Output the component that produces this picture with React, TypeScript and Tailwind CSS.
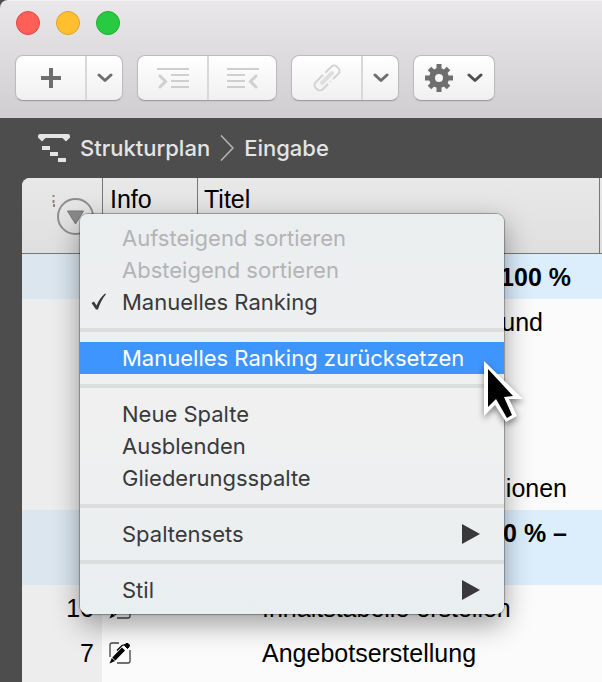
import type { ReactNode } from "react";

type Row = {
  nr?: string;
  note?: boolean;
  title?: string;
  group?: boolean;
  height?: string;
  // where a right-aligned title ends
  end?: string;
};

const rows: Row[] = [
  { title: "100 %", group: true, end: "text-right pr-7" },
  { title: "und", height: "h-19", end: "text-right pr-14" },
  {},
  {},
  { title: "ionen", end: "text-right pr-8" },
  { title: "10 % –", group: true, height: "h-[75px]", end: "text-right pr-8" },
  { nr: "16", note: true, title: "Inhaltstabelle erstellen" },
  { nr: "7", note: true, title: "Angebotserstellung" },
  {},
];

const menuGroups = [
  [
    { label: "Aufsteigend sortieren", disabled: true },
    { label: "Absteigend sortieren", disabled: true },
    { label: "Manuelles Ranking", checked: true },
  ],
  [{ label: "Manuelles Ranking zurücksetzen", active: true }],
  [{ label: "Neue Spalte" }, { label: "Ausblenden" }, { label: "Gliederungsspalte" }],
  [{ label: "Spaltensets", submenu: true }],
  [{ label: "Stil", submenu: true }],
] as {
  label: string;
  disabled?: boolean;
  checked?: boolean;
  active?: boolean;
  submenu?: boolean;
}[][];

function Chevron() {
  return (
    <svg viewBox="0 0 16 10" fill="none" stroke="currentColor" strokeWidth={3} strokeLinecap="round" strokeLinejoin="round" className="w-4 h-[10px]">
      <path d="M2 2l6 5.5L14 2" />
    </svg>
  );
}

function IndentIcon() {
  return (
    <svg viewBox="0 0 32 22" fill="none" stroke="currentColor" strokeWidth={2} className="w-8 h-[22px]">
      <path d="M0 2h32M14 8h18M14 14h18M14 20h18" />
      <path d="M3 9l5.500 5.500L3 20" strokeWidth={3} strokeLinecap="round" />
    </svg>
  );
}

function OutdentIcon() {
  return (
    <svg viewBox="0 0 32 22" fill="none" stroke="currentColor" strokeWidth={2} className="w-8 h-[22px]">
      <path d="M0 2h32M0 8h18M0 14h18M0 20h18" />
      <path d="M29 9l-5.500 5.500L29 20" strokeWidth={3} strokeLinecap="round" />
    </svg>
  );
}

function LinkIcon() {
  return (
    <svg viewBox="0 0 28 28" fill="none" stroke="currentColor" strokeWidth={2} className="w-7 h-7">
      <g transform="rotate(-45 14 14)">
        <path d="M10.500 19H3a4 4 0 0 1-4-4v-2a4 4 0 0 1 4-4H13.500" />
        <path d="M17.500 19H25a4 4 0 0 0 4-4v-2a4 4 0 0 0-4-4H16.500" />
        <path d="M13.500 19h1" />
        <path d="M7 14h14" strokeWidth={4} strokeLinecap="round" opacity={0.7} />
      </g>
    </svg>
  );
}

function GearIcon() {
  return (
    <svg viewBox="0 0 28 28" className="w-7 h-7">
      <g stroke="currentColor" strokeWidth={5}>
        <path d="M14 0v7M14 21v7M0 14h7M21 14h7M4.500 4.500l5 5M18.500 18.500l5 5M4.500 23.500l5-5M18.500 9.500l5-5" />
      </g>
      <circle cx="14" cy="14" r="7" fill="none" stroke="currentColor" strokeWidth={6} />
    </svg>
  );
}

function NoteIcon() {
  return (
    <svg viewBox="0 0 22 22" className="w-[22px] h-[22px]">
      <path d="M10 1H3a2 2 0 0 0-2 2v12M21 8v11a2 2 0 0 1-2 2H8" fill="none" stroke="#444" strokeWidth={1.300} />
      <path d="M0.500 21.500l2.300-5.500 3.200 3z" />
      <path d="M4.800 17L14.500 7" stroke="#000" strokeWidth={4.300} />
      <path d="M15.500 3.500l1.500-2h2l1.500 1.500-.5 2-1.500 1.500z" stroke="#000" strokeWidth={1} />
      <path d="M8 8.500L13 3.500l3-1" fill="none" stroke="#000" strokeWidth={1.300} />
    </svg>
  );
}

function ToolGroup({ children }: { children: ReactNode }) {
  return (
    <div className="flex h-[46px] rounded-lg border border-[#bdbbbd] border-b-[#9d9b9d] bg-linear-to-b from-white to-[#f0f0f0] divide-x-2 divide-[#d9d8d9] shadow-xs">
      {children}
    </div>
  );
}

function ToolButton({ label, size, children }: { label: string; size: string; children: ReactNode }) {
  return (
    <button type="button" aria-label={label} className={`flex items-center justify-center ${size}`}>
      {children}
    </button>
  );
}

function ColumnMenu() {
  return (
    <div
      role="menu"
      className="absolute left-20 top-[214px] w-106 py-2 rounded-lg bg-linear-to-b from-[#ebeeef] via-[#f0f0f0] to-[#e9eef0] text-[#39393b] font-[Inter,sans-serif] text-[22px] leading-8 shadow-[0_0_1px_1px_rgba(0,0,0,0.3),0_10px_28px_rgba(0,0,0,0.38)]"
    >
      {menuGroups.map((group, i) => (
        <div key={i}>
          {i > 0 && <div role="separator" className="my-[10px] h-1 bg-[#dcdddd]" />}
          {group.map((item) => (
            <button
              key={item.label}
              type="button"
              role="menuitem"
              disabled={item.disabled}
              className={`flex w-full h-8 items-center pr-6 text-left ${
                item.active ? "bg-[#3f95fe] text-white" : item.disabled ? "text-[#b2b4b5]" : ""
              }`}
            >
              <span className="flex w-[42px] pl-[11px]">
                {item.checked && (
                  <svg viewBox="0 0 16 18" className="w-4 h-[18px]">
                    <path d="M0.500 10L3 8.500l2.500 4C7.500 7.500 10.500 3.500 14 .5l1 .7C11.500 5.500 8.800 10.500 7 16.500H5z" fill="currentColor" />
                  </svg>
                )}
              </span>
              <span className="flex-1 whitespace-nowrap">{item.label}</span>
              {item.submenu && (
                <svg viewBox="0 0 18 20" className="w-[18px] h-5">
                  <path d="M0 0l18 10L0 20z" fill="currentColor" />
                </svg>
              )}
            </button>
          ))}
        </div>
      ))}
    </div>
  );
}

export default function App() {
  return (
    <div className="relative flex h-screen flex-col overflow-hidden bg-[#4d4d4d]">
      {/* Title bar with toolbar */}
      <header className="shrink-0 h-[118px] px-4 pt-[10px] rounded-tl-lg border-t border-[#f4f3f4] bg-linear-to-b from-[#e9e7ea] to-[#d0ced0]">
        <div className="flex gap-4">
          <button type="button" aria-label="Schließen" className="size-6 rounded-full border border-[#e2463f] bg-[#ff5f57]" />
          <button type="button" aria-label="Minimieren" className="size-6 rounded-full border border-[#e0a033] bg-[#ffbf2f]" />
          <button type="button" aria-label="Zoomen" className="size-6 rounded-full border border-[#1dad2b] bg-[#28ca41]" />
        </div>
        <div className="flex gap-[14px] mt-5 -ml-px text-[#6e6e6e]">
          <ToolGroup>
            <ToolButton label="Hinzufügen" size="w-[71px]">
              <svg viewBox="0 0 20 20" stroke="currentColor" strokeWidth={4} className="size-5">
                <path d="M10 0v20M0 10h20" />
              </svg>
            </ToolButton>
            <ToolButton label="Hinzufügen-Optionen" size="w-[35px]">
              <Chevron />
            </ToolButton>
          </ToolGroup>
          <div className="text-[#cfcfcf]">
            <ToolGroup>
              <ToolButton label="Einrücken" size="w-[71px]">
                <IndentIcon />
              </ToolButton>
              <ToolButton label="Ausrücken" size="w-[67px]">
                <OutdentIcon />
              </ToolButton>
            </ToolGroup>
          </div>
          <ToolGroup>
            <ToolButton label="Verknüpfen" size="w-[71px] text-[#d3d3d3]">
              <LinkIcon />
            </ToolButton>
            <ToolButton label="Verknüpfen-Optionen" size="w-[35px]">
              <Chevron />
            </ToolButton>
          </ToolGroup>
          <ToolGroup>
            <ToolButton label="Aktionen" size="w-20 gap-[14px]">
              <GearIcon />
              <span className="text-[#505050]">
                <Chevron />
              </span>
            </ToolButton>
          </ToolGroup>
        </div>
      </header>

      {/* Breadcrumb */}
      <nav className="flex shrink-0 h-15 items-center pl-[38px] font-[Inter,sans-serif] text-[22px] font-medium text-[#e4e4e4]">
        <svg viewBox="0 0 32 28" fill="currentColor" className="w-8 h-7 mr-[10px]">
          <path d="M2 0h28a2 2 0 0 1 2 2v1.500L28 7.500 24.500 4h-17L4 7.500 0 3.500V2a2 2 0 0 1 2-2zM4 12h8v4H4zM12 18h8v4h-8zM20 24h8v4h-8z" />
        </svg>
        <a href="#strukturplan">Strukturplan</a>
        <svg viewBox="0 0 14 26" fill="none" stroke="#b4b4b4" strokeWidth={1.600} className="w-[14px] h-[26px] mx-[10px]">
          <path d="M1 0.500l12 12.500L1 25.500" />
        </svg>
        <a href="#eingabe">Eingabe</a>
      </nav>

      <main className="flex-1 min-h-0 pl-[22px]">
        <div className="h-full overflow-hidden rounded-tl-lg bg-[#fbfbfb]">
          <table className="w-full table-fixed border-separate border-spacing-0 font-['Liberation_Sans',sans-serif] text-[25px] leading-[30px] text-black">
            <colgroup>
              <col className="w-20" />
              <col className="w-[95px]" />
              <col />
              <col className="w-[3px]" />
            </colgroup>
            <thead>
              <tr className="h-19 bg-linear-to-b from-[#e8e8e8] to-[#dfdfdf] align-top text-left">
                <th className="border-b border-[#777] p-0">
                  <button type="button" aria-label="Spaltenmenü" className="flex w-full pl-[29px] pt-4">
                    <svg viewBox="0 0 44 42" className="w-11 h-[42px]">
                      <path d="M2.500 1v2M2.500 6v3M3 10v3" stroke="#9a8078" strokeWidth={2} />
                      <circle cx="24.500" cy="22.500" r="17.500" fill="none" stroke="#8e8e8e" strokeWidth={2} />
                      <path d="M16.500 17h16l-8 13z" fill="#8b8b8b" stroke="#777" strokeWidth={1} />
                    </svg>
                  </button>
                </th>
                <th className="border-b border-l border-[#777] p-0 pl-[7px] pt-[6px] font-normal">Info</th>
                <th className="border-b border-l border-[#777] p-0 pl-[6px] pt-[6px] font-normal">Titel</th>
                <th aria-label="Weitere" className="border-b border-l border-[#777] p-0" />
              </tr>
            </thead>
            <tbody>
              {rows.map((row, i) => (
                <tr key={i} className={`align-top ${row.height ?? "h-[45px]"} ${row.group ? "bg-[#dceefc] font-bold" : ""}`}>
                  <td className={`p-0 pt-2 pr-2 text-right ${row.group ? "bg-[#dbe6ef]" : "bg-[#ededed]"}`}>{row.nr}</td>
                  <td className="p-0 pt-3 pl-[7px]">{row.note && <NoteIcon />}</td>
                  <td className={`p-0 pt-2 whitespace-nowrap ${row.end ?? "pl-[65px]"}`}>{row.title}</td>
                  <td className="p-0" />
                </tr>
              ))}
            </tbody>
          </table>
        </div>
      </main>

      <ColumnMenu />

      {/* Mouse pointer */}
      <svg viewBox="0 0 44 68" className="absolute left-[482px] top-[359px] w-11 h-17 drop-shadow-[0_3px_3px_rgba(0,0,0,0.45)]">
        <path d="M2 2v55l11-11 11 17 11-6-8-17h14z" fill="#fff" />
        <path d="M6 10v38l8-8 11 19 5-3-8-18 9-1z" fill="#000" />
      </svg>
    </div>
  );
}
